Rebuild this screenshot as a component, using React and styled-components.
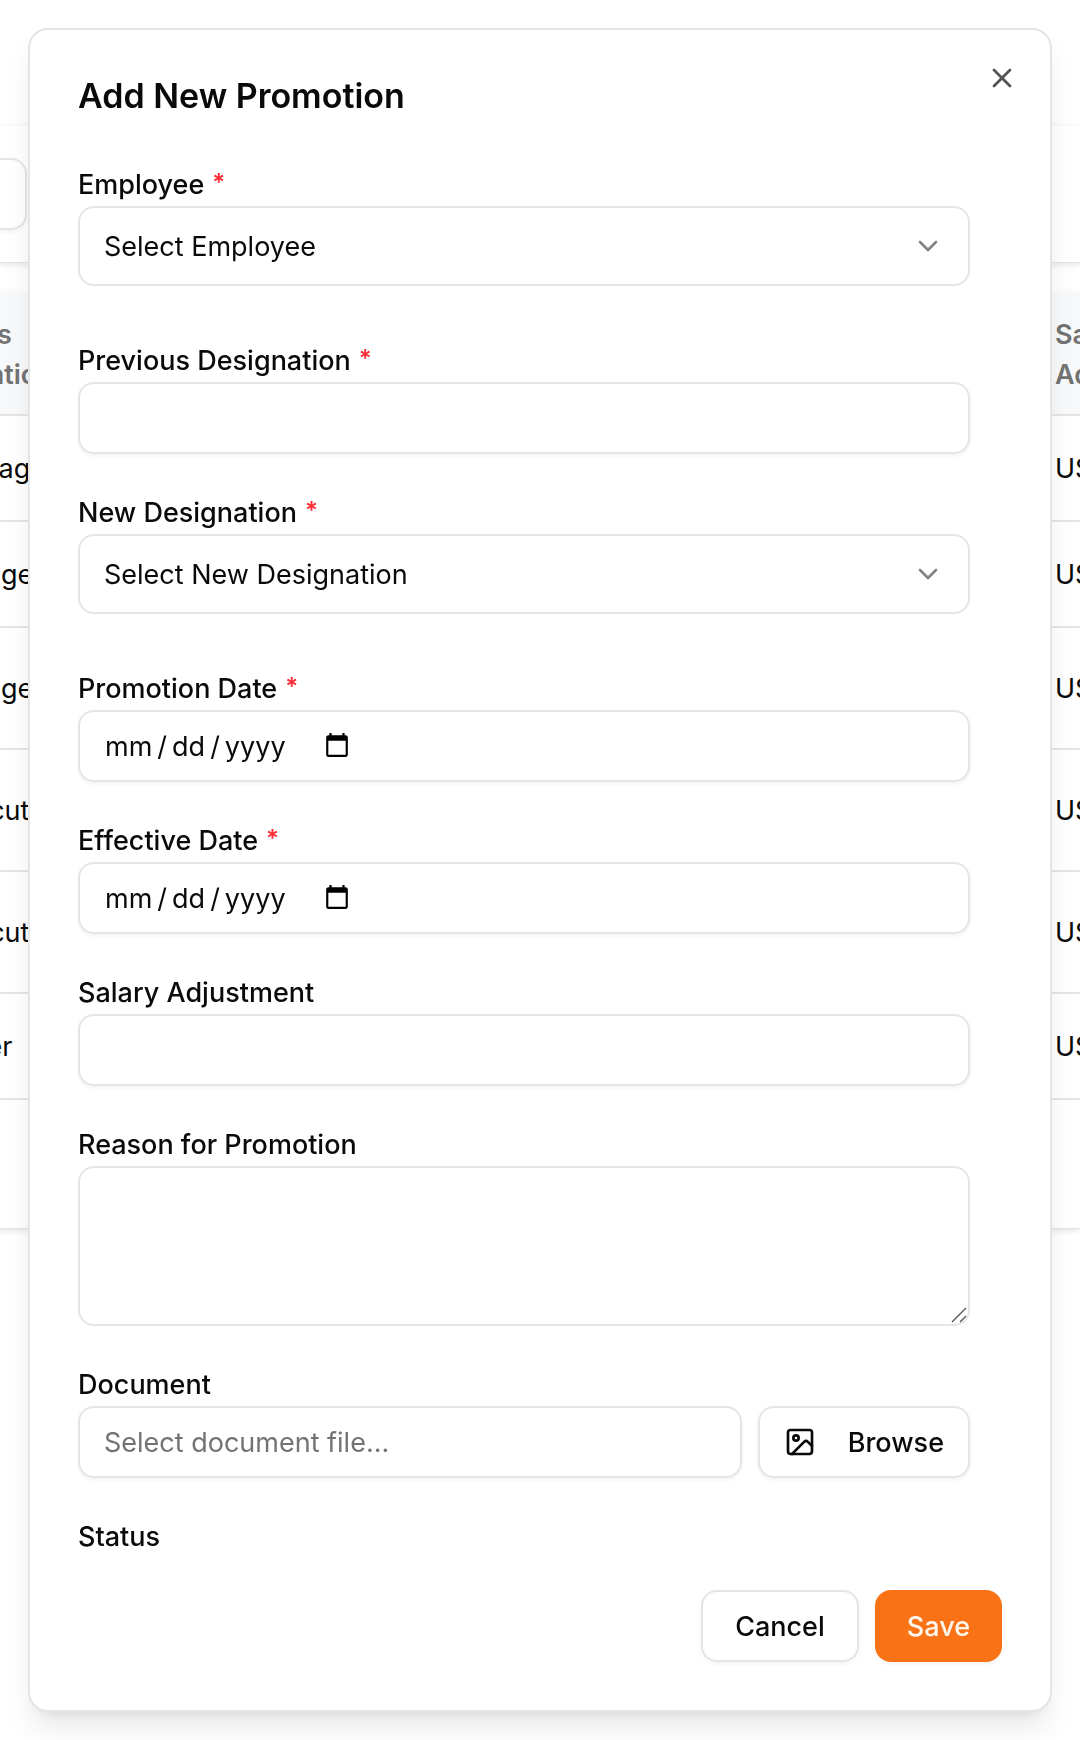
import styled, { createGlobalStyle } from 'styled-components';
import { ChevronDown, Image, X } from 'lucide-react';

const GlobalStyle = createGlobalStyle`
  *, *::before, *::after {
    box-sizing: border-box;
  }

  body {
    margin: 0;
    background: #fff;
    color: #0a0a0a;
    font-family: Inter, "Liberation Sans", sans-serif;
    font-size: 27px;
  }

  input, select, textarea, button {
    font: inherit;
    color: inherit;
  }
`;

const Page = styled.div`
  min-height: 100vh;
  padding-top: 125px;
  overflow: hidden;
`;

const FilterCard = styled.section`
  padding: 32px 32px 32px 0;
  background: #fff;
  border-top: 1px solid #f8f8f8;
  border-bottom: 1px solid #e5e5e5;
  box-shadow: 0 2px 6px rgba(0, 0, 0, 0.1);
`;

const Search = styled.input`
  display: block;
  width: 27px;
  height: 72px;
  padding: 0;
  border: 2px solid #e5e5e5;
  border-left: 0;
  border-radius: 0 16px 16px 0;
  background: #fff;
  box-shadow: 0 2px 4px rgba(0, 0, 0, 0.05);
`;

const TableCard = styled.section`
  margin-top: 29px;
  margin-left: -134px;
  padding-bottom: 128px;
  background: #fff;
  border-bottom: 1px solid #e5e5e5;
  box-shadow: 0 2px 6px rgba(0, 0, 0, 0.1);
`;

const Table = styled.table`
  width: 100%;
  table-layout: fixed;
  border-collapse: separate;
  border-spacing: 0;
  text-align: left;
  white-space: nowrap;
`;

const Th = styled.th`
  width: ${({ $width }) => $width};
  height: 124px;
  padding: 4px 0 0 32px;
  overflow: hidden;
  background: #f8f9fa;
  border-bottom: 2px solid #e5e5e5;
  color: #737373;
  font-weight: 600;
  line-height: 40px;
`;

const Td = styled.td`
  height: ${({ $tall }) => ($tall ? 122 : 106)}px;
  padding: 2px 0 0 32px;
  overflow: hidden;
  border-bottom: 2px solid #e5e5e5;
  line-height: 40px;
`;

const Overlay = styled.div`
  position: fixed;
  inset: 0;
  display: flex;
  align-items: center;
  justify-content: center;
  padding: 28px;
`;

const Dialog = styled.div`
  position: relative;
  display: flex;
  flex-direction: column;
  gap: 32px;
  width: 100%;
  max-width: 1024px;
  max-height: 100%;
  padding: 48px;
  border: 2px solid #e5e5e5;
  border-radius: 20px;
  background: #fff;
  box-shadow: 0 20px 30px -6px rgba(0, 0, 0, 0.1), 0 8px 12px -8px rgba(0, 0, 0, 0.1);
`;

const Title = styled.h2`
  flex: none;
  margin: 0;
  font-size: 34px;
  font-weight: 600;
  line-height: 36px;
`;

const CloseButton = styled.button`
  position: absolute;
  top: 32px;
  right: 32px;
  display: flex;
  padding: 0;
  border: 0;
  background: none;
  opacity: 0.7;
  cursor: pointer;
`;

const Form = styled.form`
  display: flex;
  flex: 1;
  flex-direction: column;
  gap: 44px;
  min-height: 0;
  padding: 24px 32px 0 0;
  overflow-y: auto;
  scrollbar-width: none;
`;

const Field = styled.div`
  display: flex;
  flex: none;
  flex-direction: column;
  gap: 6px;
  margin-bottom: ${({ $spaced }) => ($spaced ? 16 : 0)}px;
`;

const Label = styled.label`
  font-weight: 500;
  line-height: 30px;
`;

const Required = styled.span`
  margin-left: 2px;
  color: #fb2c36;
  font-size: 24px;
  font-weight: 600;
  line-height: 0;
  vertical-align: 3px;
`;

const Control = styled.div`
  position: relative;
  display: flex;
  gap: 16px;
`;

const Input = styled.input`
  display: flex;
  flex: 1;
  min-width: 0;
  height: 72px;
  padding: 0 24px;
  border: 2px solid #e5e5e5;
  border-radius: 16px;
  background: #fff;
  box-shadow: 0 2px 4px rgba(0, 0, 0, 0.05);

  &::placeholder {
    color: #737373;
    opacity: 1;
  }

  &::-webkit-datetime-edit {
    flex: none;
  }

  &::-webkit-datetime-edit-text {
    padding: 0 4px;
  }

  &::-webkit-calendar-picker-indicator {
    width: 28px;
    height: 28px;
    margin-left: 16px;
    padding: 0;
  }
`;

const Select = styled.select`
  flex: 1;
  height: 80px;
  padding: 0 72px 0 24px;
  border: 2px solid #e5e5e5;
  border-radius: 16px;
  background: #fff;
  appearance: none;
`;

const Chevron = styled(ChevronDown)`
  position: absolute;
  top: 24px;
  right: 26px;
  opacity: 0.5;
  pointer-events: none;
`;

const Textarea = styled.textarea`
  flex: 1;
  height: 160px;
  padding: 16px 24px;
  border: 2px solid #e5e5e5;
  border-radius: 16px;
  background: #fff;
  resize: none;
`;

const Grip = styled.svg`
  position: absolute;
  right: 2px;
  bottom: 2px;
  pointer-events: none;
`;

const Button = styled.button`
  display: flex;
  align-items: center;
  justify-content: center;
  gap: 32px;
  height: 72px;
  padding: 0 ${({ $icon }) => ($icon ? 24 : 32)}px;
  border: 2px solid #e5e5e5;
  border-radius: 16px;
  background: #fff;
  box-shadow: 0 2px 4px rgba(0, 0, 0, 0.05);
  font-weight: 500;
  cursor: pointer;
`;

const SaveButton = styled(Button)`
  border: 0;
  background: #f97316;
  color: #fff7ed;
`;

const Footer = styled.div`
  display: flex;
  flex: none;
  justify-content: flex-end;
  gap: 16px;
`;

const rows = [
  { designation: 'HR Manager', salary: 'USD 5,000' },
  { designation: 'IT Manager', salary: 'USD 4,500' },
  { designation: 'IT Manager', salary: 'USD 4,000', tall: true },
  { designation: 'HR Executive', salary: 'USD 3,500', tall: true },
  { designation: 'HR Executive', salary: 'USD 3,000', tall: true },
  { designation: 'Designer', salary: 'USD 2,500' },
];

function FormField({ id, label, required, spaced, children }) {
  return (
    <Field $spaced={spaced}>
      <Label htmlFor={id}>
        {label}
        {required && <Required> *</Required>}
      </Label>
      <Control>{children}</Control>
    </Field>
  );
}

function SelectField({ id, label, placeholder, required }) {
  return (
    <FormField id={id} label={label} required={required} spaced>
      <Select id={id} defaultValue="">
        {placeholder && <option value="">{placeholder}</option>}
      </Select>
      <Chevron size={32} />
    </FormField>
  );
}

function PromotionsPage() {
  return (
    <Page>
      <FilterCard>
        <Search type="search" aria-label="Search" />
      </FilterCard>
      <TableCard>
        <Table>
          <thead>
            <tr>
              <Th $width="auto">Previous<br />Designation</Th>
              <Th $width="57px">Salary<br />Adjustment</Th>
            </tr>
          </thead>
          <tbody>
            {rows.map((row, index) => (
              <tr key={index}>
                <Td $tall={row.tall}>{row.designation}</Td>
                <Td $tall={row.tall}>{row.salary}</Td>
              </tr>
            ))}
          </tbody>
        </Table>
      </TableCard>
    </Page>
  );
}

function PromotionDialog() {
  return (
    <Overlay>
      <Dialog role="dialog" aria-labelledby="dialog-title">
        <Title id="dialog-title">Add New Promotion</Title>
        <CloseButton type="button" aria-label="Close">
          <X size={32} />
        </CloseButton>
        <Form id="promotion-form">
          <SelectField id="employee" label="Employee" placeholder="Select Employee" required />
          <FormField id="previous" label="Previous Designation" required>
            <Input id="previous" type="text" />
          </FormField>
          <SelectField id="new" label="New Designation" placeholder="Select New Designation" required />
          <FormField id="promotion-date" label="Promotion Date" required>
            <Input id="promotion-date" type="date" />
          </FormField>
          <FormField id="effective-date" label="Effective Date" required>
            <Input id="effective-date" type="date" />
          </FormField>
          <FormField id="salary" label="Salary Adjustment">
            <Input id="salary" type="text" />
          </FormField>
          <FormField id="reason" label="Reason for Promotion">
            <Textarea id="reason" />
            <Grip width="18" height="18" fill="none" stroke="#555" strokeWidth="1.4">
              <path d="M2 16 16 2M10 16l6-6" />
            </Grip>
          </FormField>
          <FormField id="document" label="Document">
            <Input id="document" type="text" placeholder="Select document file..." readOnly />
            <Button type="button" $icon>
              <Image size={32} />
              Browse
            </Button>
          </FormField>
          <SelectField id="status" label="Status" />
        </Form>
        <Footer>
          <Button type="button">Cancel</Button>
          <SaveButton type="submit" form="promotion-form">Save</SaveButton>
        </Footer>
      </Dialog>
    </Overlay>
  );
}

export default function App() {
  return (
    <>
      <GlobalStyle />
      <PromotionsPage />
      <PromotionDialog />
    </>
  );
}
